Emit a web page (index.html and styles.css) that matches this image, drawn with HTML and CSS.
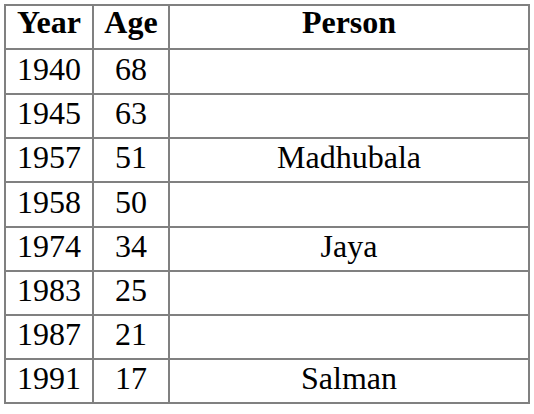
FILE: index.html
```html
<!DOCTYPE html>
<html>
<head>
<meta charset="utf-8">
<link rel="stylesheet" href="styles.css">
</head>
<body>
<table class="grid">
  <colgroup>
    <col class="c-year">
    <col class="c-age">
    <col class="c-person">
  </colgroup>
  <thead>
    <tr><th>Year</th><th>Age</th><th>Person</th></tr>
  </thead>
  <tbody>
    <tr class="tall"><td>1940</td><td>68</td><td></td></tr>
    <tr><td>1945</td><td>63</td><td></td></tr>
    <tr><td>1957</td><td>51</td><td>Madhubala</td></tr>
    <tr class="tall"><td>1958</td><td>50</td><td></td></tr>
    <tr><td>1974</td><td>34</td><td>Jaya</td></tr>
    <tr><td>1983</td><td>25</td><td></td></tr>
    <tr><td>1987</td><td>21</td><td></td></tr>
    <tr><td>1991</td><td>17</td><td>Salman</td></tr>
  </tbody>
</table>
</body>
</html>
```
FILE: styles.css
```css
html, body {
  background: #ffffff;
}
body {
  margin: 4px;
  font-family: "Liberation Serif", "Times New Roman", serif;
  color: #000000;
}
.grid {
  border-collapse: separate;
  border-spacing: 0;
  table-layout: fixed;
  width: 526px;
  border-left: 2px solid #808080;
  border-top: 2px solid #808080;
}
.c-year { width: 88px; }
.c-age { width: 76px; }
.c-person { width: 360px; }
.grid th,
.grid td {
  box-sizing: border-box;
  border-right: 2px solid #808080;
  border-bottom: 2px solid #808080;
  padding: 0;
  height: 44px;
  font-size: 32px;
  line-height: 37px;
  text-align: center;
  vertical-align: top;
}
.grid th {
  font-weight: bold;
  line-height: 33px;
}
.grid .tall td {
  height: 45px;
  padding-top: 1px;
}
```
